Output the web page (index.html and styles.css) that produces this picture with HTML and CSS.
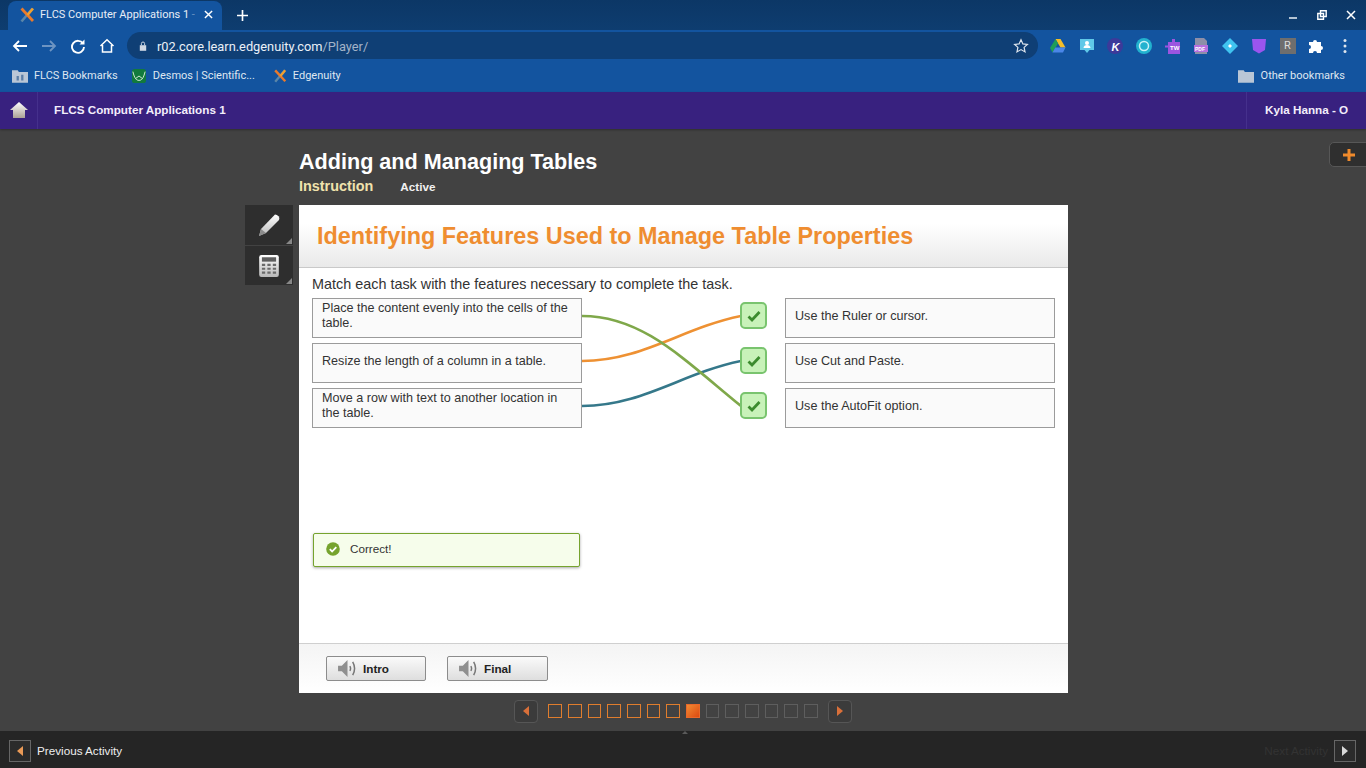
FILE: index.html
```html
<!DOCTYPE html>
<html lang="en">
<head>
<meta charset="utf-8">
<title>FLCS Computer Applications 1</title>
<link rel="stylesheet" href="styles.css">
</head>
<body>
<div class="browser">
  <div class="tabstrip">
    <div class="tab">
      <svg class="fav" viewBox="0 0 16 16"><path d="M13.500 1.500L2.500 14.500" stroke="#5b86a8" stroke-width="2.600"/><path d="M2.500 1.500L14 14" stroke="#ea7a2a" stroke-width="2.800"/><path d="M14 1.500L8.500 8" stroke="#f0a030" stroke-width="2.600"/></svg>
      <span class="tabtitle">FLCS Computer Applications 1 <span class="tabfade">-</span></span>
      <svg class="tabx" viewBox="0 0 10 10"><path d="M1 1l8 8M9 1l-8 8" stroke="#fff" stroke-width="1.600"/></svg>
    </div>
    <svg class="newtab" viewBox="0 0 12 12"><path d="M6 0v12M0 6h12" stroke="#fff" stroke-width="1.800"/></svg>
    <div class="winbtns">
      <svg viewBox="0 0 10 10"><path d="M1 8h8" stroke="#dfe6ee" stroke-width="1.600"/></svg>
      <svg viewBox="0 0 10 10"><path d="M3.500 .8h5.700v5.700h-5.700zM.8 3.500h5.700v5.700h-5.700z" fill="#123f70" stroke="#fff" stroke-width="1.400"/></svg>
      <svg viewBox="0 0 10 10"><path d="M1 1l8 8M9 1l-8 8" stroke="#fff" stroke-width="1.500"/></svg>
    </div>
  </div>
  <div class="toolbar">
    <svg class="tool" viewBox="0 0 16 16"><path d="M15 8H2M7 3L2 8l5 5" fill="none" stroke="#fff" stroke-width="1.800"/></svg>
    <svg class="tool" viewBox="0 0 16 16"><path d="M1 8h13M9 3l5 5-5 5" fill="none" stroke="#6d94c2" stroke-width="1.800"/></svg>
    <svg class="tool" viewBox="0 0 16 16"><path d="M13 5.500A6 6 0 1 0 14 9" fill="none" stroke="#fff" stroke-width="1.900"/><path d="M14.500 1.500v5h-5z" fill="#fff"/></svg>
    <svg class="tool" viewBox="0 0 16 16"><path d="M1.500 8L8 1.800 14.500 8M3.500 7v7h9V7" fill="none" stroke="#fff" stroke-width="1.500"/></svg>
    <div class="omnibox">
      <svg class="lock" viewBox="0 0 10 12"><path d="M1 5h8v7H1z" fill="#cfd8e4"/><path d="M3 5V3a2 2 0 0 1 4 0v2" fill="none" stroke="#cfd8e4" stroke-width="1.200"/></svg>
      <span class="url">r02.core.learn.edgenuity.com<span class="urlpath">/Player/</span></span>
      <svg class="star" viewBox="0 0 16 16"><path d="M8 1.800l1.900 4.100 4.500.5-3.300 3 .9 4.500L8 11.600l-4 2.300.9-4.500-3.300-3 4.500-.5z" fill="none" stroke="#dfe6ee" stroke-width="1.200"/></svg>
    </div>
    <div class="exts">
      <svg viewBox="0 0 16 16"><path d="M5.500 1h5l5 8.500h-5z" fill="#f4bd2a"/><path d="M5.500 1L0 10l2.500 4.500L8 5.500z" fill="#1f9d57"/><path d="M2.500 14.500h10.500l2.500-5H5.300z" fill="#4a86e8"/></svg>
      <svg viewBox="0 0 16 16"><path d="M1 1h14v11h-4.500L8 15l-2.500-3H1z" fill="#5fc8e8"/><circle cx="8" cy="5" r="2" fill="#fff"/><path d="M4.500 10c0-4 7-4 7 0z" fill="#fff"/></svg>
      <svg viewBox="0 0 16 16"><circle cx="8" cy="8" r="8" fill="#3c3a9a"/><text class="kglyph" x="4.500" y="12.500">K</text></svg>
      <svg viewBox="0 0 16 16"><circle cx="8" cy="8" r="8" fill="#22b2cf"/><circle cx="8" cy="8" r="4.500" fill="none" stroke="#c9f2f8" stroke-width="1.500"/></svg>
      <svg viewBox="0 0 16 16"><path d="M3 4h4V1h3v3h5v12H3V9.500H0v-2h3z" fill="#9b55e0"/><text class="twglyph" x="5" y="12">TW</text></svg>
      <svg viewBox="0 0 16 16"><path d="M2 0h9l3 3v13H2z" fill="#8d8fa8"/><path d="M1 7h14v7H1z" fill="#b66fe0"/><text class="pdfglyph" x="2" y="12.500">PDF</text></svg>
      <svg viewBox="0 0 16 16"><path d="M8 0l8 8-8 8-8-8z" fill="#40c4f0"/><path d="M8 6l2 2-2 2-2-2z" fill="#fff"/></svg>
      <svg viewBox="0 0 16 16"><path d="M1 1h14l-1 11-6 3.500L2 12z" fill="#9a55ee"/></svg>
      <div class="rbadge">R</div>
      <svg viewBox="0 0 16 16"><path d="M1 4h4a2 2 0 1 1 4 0h4v4a2 2 0 1 1 0 4v3H9a2 2 0 1 0-4 0H1v-4a2 2 0 1 0 0-4z" fill="#fff"/></svg>
      <svg viewBox="0 0 16 16"><circle cx="8" cy="2.500" r="1.500" fill="#dfe6ee"/><circle cx="8" cy="8" r="1.500" fill="#dfe6ee"/><circle cx="8" cy="13.500" r="1.500" fill="#dfe6ee"/></svg>
    </div>
  </div>
  <div class="bookmarks">
    <div class="bm bm-first"><svg class="bmicon" viewBox="0 0 14 12"><path d="M0 1h5l1 1.500h8V12H0z" fill="#b9c6d6"/><path d="M4 6h2v4H4zM8 5h2v5H8z" fill="#5b7ea6"/></svg>FLCS Bookmarks</div>
    <div class="bm bm-desmos"><svg class="bmicon" viewBox="0 0 16 16"><rect width="16" height="16" rx="3" fill="#127a3c"/><path d="M1 3c2 8 4 10 7 10s5-2 7-10M4 11l4-3 4 3" fill="none" stroke="#d7ecd9" stroke-width="1.100"/></svg>Desmos | Scientific...</div>
    <div class="bm"><svg class="bmicon" viewBox="0 0 16 16"><path d="M13.500 1.500L2.500 14.500" stroke="#5b86a8" stroke-width="2.600"/><path d="M2.500 1.500L14 14" stroke="#ea7a2a" stroke-width="2.800"/><path d="M14 1.500L8.500 8" stroke="#f0a030" stroke-width="2.600"/></svg>Edgenuity</div>
    <div class="bm bm-other"><svg class="bmicon" viewBox="0 0 14 12"><path d="M0 1h5l1 1.500h8V12H0z" fill="#b9c6d6"/></svg>Other bookmarks</div>
  </div>
</div>

<header class="navbar">
  <div class="navhome"><svg viewBox="0 0 18 17"><path d="M9 0l9 8H15v8H3V8H0z" fill="url(#homegrad)"/><defs><linearGradient id="homegrad" x1="0" y1="0" x2="0" y2="1"><stop offset="0" stop-color="#fff"/><stop offset="1" stop-color="#aaa296"/></linearGradient></defs></svg></div>
  <div class="navtitle">FLCS Computer Applications 1</div>
  <div class="navuser">Kyla Hanna - O</div>
</header>

<main class="stage">
  <button class="plus" aria-label="Expand"><svg viewBox="0 0 12 12"><path d="M4.500 0h3v4.500H12v3H7.500V12h-3V7.500H0v-3h4.500z" fill="#ef8a2c"/></svg></button>
  <div class="activity">
    <h1 class="lesson">Adding and Managing Tables</h1>
    <div class="sub"><span class="instr">Instruction</span><span class="active">Active</span></div>
    <div class="work">
      <aside class="tools">
        <div class="toolbtn"><svg viewBox="0 0 24 24"><path d="M18 1.500q2 0 3.500 1.800t.5 3.700L9 20l-7 3 2-7z" fill="url(#toolgrad)"/><path d="M4 16l5 4-7 3z" fill="#8b8b8b"/><defs><linearGradient id="toolgrad" x1="0" y1="0" x2="0" y2="1"><stop offset="0" stop-color="#fff"/><stop offset="1" stop-color="#b9b9b9"/></linearGradient></defs></svg></div>
        <div class="toolbtn"><svg viewBox="0 0 20 22"><rect x="1" y="1" width="18" height="20" rx="2" fill="url(#toolgrad)"/><rect x="3.500" y="3" width="13" height="4" fill="#5e5e5e"/><path d="M3.500 9h3v2h-3zM8.500 9h3v2h-3zM13.500 9h3v2h-3zM3.500 12.500h3v2h-3zM8.500 12.500h3v2h-3zM13.500 12.500h3v2h-3zM3.500 16h3v2h-3zM8.500 16h3v2h-3zM13.500 16h3v2h-3z" fill="#6a6a6a"/></svg></div>
      </aside>
      <section class="card">
        <div class="cardhead"><h2 class="cardtitle">Identifying Features Used to Manage Table Properties</h2></div>
        <div class="cardbody">
          <p class="prompt">Match each task with the features necessary to complete the task.</p>
          <div class="match">
            <div class="col">
              <div class="opt">Place the content evenly into the cells of the table.</div>
              <div class="opt opt-single">Resize the length of a column in a table.</div>
              <div class="opt">Move a row with text to another location in the table.</div>
            </div>
            <svg class="wires" viewBox="0 0 159 130">
              <path d="M0 63C60 63 100 30 159 18" stroke="#ee9133"/>
              <path d="M0 108C60 108 100 75 159 63" stroke="#35788a"/>
              <path d="M0 18C60 18 100 60 159 108" stroke="#7fa84a"/>
            </svg>
            <div class="checks">
              <div class="check"><svg viewBox="0 0 14 12"><path d="M1.500 6.500l3.500 3.500L12.500 2" fill="none" stroke="#3c8c2e" stroke-width="2.800"/></svg></div>
              <div class="check"><svg viewBox="0 0 14 12"><path d="M1.500 6.500l3.500 3.500L12.500 2" fill="none" stroke="#3c8c2e" stroke-width="2.800"/></svg></div>
              <div class="check"><svg viewBox="0 0 14 12"><path d="M1.500 6.500l3.500 3.500L12.500 2" fill="none" stroke="#3c8c2e" stroke-width="2.800"/></svg></div>
            </div>
            <div class="col">
              <div class="opt opt-single">Use the Ruler or cursor.</div>
              <div class="opt opt-single">Use Cut and Paste.</div>
              <div class="opt opt-single">Use the AutoFit option.</div>
            </div>
          </div>
          <div class="feedback"><svg viewBox="0 0 14 14"><circle cx="7" cy="7" r="6.800" fill="#76a32e"/><path d="M3.800 7.200l2.300 2.300 4.200-4.400" fill="none" stroke="#fff" stroke-width="1.800"/></svg>Correct!</div>
        </div>
        <div class="cardfoot">
          <button class="audio"><svg viewBox="0 0 20 18"><path d="M0 6h4l6-6v18l-6-6H0z" fill="#8f8f8f"/><path d="M12.500 6.500q1.500 2.500 0 5M15.500 2q4 7 0 14" fill="none" stroke="#777" stroke-width="1.600"/></svg>Intro</button>
          <button class="audio audio-final"><svg viewBox="0 0 20 18"><path d="M0 6h4l6-6v18l-6-6H0z" fill="#8f8f8f"/><path d="M12.500 6.500q1.500 2.500 0 5M15.500 2q4 7 0 14" fill="none" stroke="#777" stroke-width="1.600"/></svg>Final</button>
        </div>
      </section>
    </div>
    <nav class="pager">
      <button class="pgarrow"><svg viewBox="0 0 6 10"><path d="M6 0v10L0 5z" fill="#d9703a"/></svg></button>
      <div class="pgsquares">
        <i class="sq done"></i><i class="sq done"></i><i class="sq done"></i><i class="sq done"></i><i class="sq done"></i><i class="sq done"></i><i class="sq done"></i><i class="sq cur"></i><i class="sq"></i><i class="sq"></i><i class="sq"></i><i class="sq"></i><i class="sq"></i><i class="sq"></i>
      </div>
      <button class="pgarrow"><svg viewBox="0 0 6 10"><path d="M0 0v10l6-5z" fill="#d9703a"/></svg></button>
    </nav>
  </div>
</main>

<footer class="footbar">
  <div class="fnav"><button class="farrow"><svg viewBox="0 0 6 10"><path d="M6 0v10L0 5z" fill="#ea9a57"/></svg></button><span class="flabel">Previous Activity</span></div>
  <div class="fnav"><span class="flabel flabel-off">Next Activity</span><button class="farrow"><svg viewBox="0 0 6 10"><path d="M0 0v10l6-5z" fill="#d8d8d8"/></svg></button></div>
</footer>
</body>
</html>
```

FILE: styles.css
```css
* { box-sizing: border-box; }
html, body { margin: 0; height: 100%; }
body {
  width: 1366px; height: 768px; overflow: hidden; display: flex; flex-direction: column;
  background: #424242; font-family: "Liberation Sans", Arial, sans-serif; color: #222;
}
h1, h2, p { margin: 0; }
button { font-family: inherit; padding: 0; cursor: pointer; }

/* browser chrome */
.browser { flex: none; height: 92px; font-family: Roboto, "Liberation Sans", sans-serif; background: #13549f; }
.tabstrip { height: 30px; display: flex; align-items: flex-end; padding-left: 8px; background: linear-gradient(#0c3766, #0e3d70); }
.tab { width: 214px; height: 29px; display: flex; align-items: center; padding: 0 9px 2px 11px; background: #13549f; border-radius: 8px 8px 0 0; color: #e8eef6; font-size: 11px; }
.fav { width: 16px; height: 16px; flex: none; }
.tabtitle { margin-left: 5px; flex: 1; white-space: nowrap; }
.tabfade { opacity: .4; }
.tabx { width: 9px; height: 9px; flex: none; }
.newtab { width: 11px; height: 11px; margin: 0 0 9px 15px; flex: none; }
.winbtns { margin-left: auto; display: flex; gap: 19px; padding: 0 10px 10px 0; align-self: flex-end; }
.winbtns svg { width: 10px; height: 10px; }
.toolbar { height: 31px; display: flex; align-items: center; padding-left: 12px; }
.tool { width: 16px; height: 16px; flex: none; margin-right: 13px; }
.omnibox { width: 911px; height: 27px; margin-left: -1px; border-radius: 14px; background: #0f3f75; display: flex; align-items: center; padding: 0 9px 0 12px; font-size: 12.800px; }
.lock { width: 8px; height: 10px; flex: none; }
.url { margin-left: 10px; padding-top: 1px; color: #eaf0f7; }
.urlpath { color: #a3b4c9; }
.star { width: 16px; height: 16px; margin-left: auto; }
.exts { display: flex; align-items: center; gap: 12.700px; margin-left: 12px; }
.exts svg, .rbadge { width: 16px; height: 16px; flex: none; }
.rbadge { background: #6e6e6e; color: #ddd; font-size: 11px; line-height: 16px; text-align: center; }
.kglyph { font: italic bold 11px "Liberation Sans", sans-serif; fill: #fff; }
.twglyph { font: bold 6px "Liberation Sans", sans-serif; fill: #fff; }
.pdfglyph { font: bold 5px "Liberation Sans", sans-serif; fill: #fff; }
.bookmarks { height: 31px; display: flex; align-items: center; padding: 0 21px 2px 12px; color: #dfe7f1; font-size: 11px; }
.bm { display: flex; align-items: center; gap: 5px; margin-right: 17px; }
.bm-first { gap: 6px; margin-right: 13px; }
.bm-desmos { gap: 6px; }
.bmicon { width: 16px; height: 14px; flex: none; }
.bm-other { margin: 0 0 0 auto; gap: 7px; }

/* app navbar */
.navbar { flex: none; height: 37px; display: flex; align-items: center; background: #38217f; color: #f3eefb; font-size: 11.700px; font-weight: bold; box-shadow: 0 1px 2px rgba(0,0,0,.3); }
.navhome { width: 38px; height: 100%; display: flex; align-items: center; justify-content: center; border-right: 1px solid #45308c; }
.navhome svg { width: 18px; height: 17px; }
.navtitle { margin: 0 0 2px 16px; }
.navuser { margin-left: auto; height: 100%; width: 120px; padding-left: 18px; line-height: 36px; border-left: 1px solid #45308c; }

/* stage */
.stage { flex: 1; position: relative; display: flex; padding-left: 299px; }
.plus { position: absolute; right: -5px; top: 13px; width: 42px; height: 25px; background: #2f2f2f; border: 1px solid #575757; border-radius: 5px; display: flex; align-items: center; padding-left: 13px; }
.plus svg { width: 12px; height: 12px; }
.activity { width: 769px; }
.lesson { margin-top: 20px; font-size: 21.600px; line-height: 25px; color: #fff; }
.sub { margin-top: 2px; height: 20px; display: flex; align-items: center; color: #fff; font-weight: bold; }
.instr { font-size: 14.400px; color: #f0e2ad; }
.active { margin-left: 27px; font-size: 11.700px; color: #f1f1f1; }
.work { display: flex; margin: 9px 0 0 -54px; }
.tools { width: 48px; margin-right: 6px; flex: none; }
.toolbtn { position: relative; height: 40px; margin-bottom: 1px; background: #2e2e2e; display: flex; align-items: center; justify-content: center; }
.toolbtn + .toolbtn { height: 39px; }
.toolbtn::after { content: ""; position: absolute; right: 1px; bottom: 1px; border: 3px solid; border-color: transparent #888 #888 transparent; }
.toolbtn svg { width: 24px; height: 24px; }
.card { width: 769px; height: 488px; flex: none; background: #fff; display: flex; flex-direction: column; }
.cardhead { height: 63px; padding: 17px 0 0 18px; border-bottom: 1px solid #c9c9c9; background: linear-gradient(#fff 30%, #e9e9e9); }
.cardtitle { font-size: 23.400px; line-height: 28px; color: #ef8d30; }
.cardbody { flex: 1; padding: 8px 13px 0; }
.prompt { font-size: 14.400px; line-height: 17px; color: #333; }
.match { display: flex; margin-top: 5px; height: 130px; }
.col { width: 270px; flex: none; display: flex; flex-direction: column; gap: 5px; }
.opt { height: 40px; padding: 2px 9px 0; border: 1px solid #9b9b9b; background: #fafafa; font-size: 12.600px; line-height: 15px; color: #333; }
.opt-single { padding-top: 10px; }
.wires { width: 159px; height: 130px; flex: none; }
.wires path { fill: none; stroke-width: 2.600; }
.checks { width: 27px; margin: 4px 18px 0 -1px; flex: none; display: flex; flex-direction: column; gap: 18px; }
.check { width: 27px; height: 27px; border: 2px solid #79c46e; border-radius: 5px; background: #c8f2b9; display: flex; align-items: center; justify-content: center; }
.check svg { width: 14px; height: 12px; }
.feedback { width: 267px; height: 34px; margin: 105px 0 0 1px; display: flex; align-items: center; gap: 10px; padding: 0 12px 3px; border: 1px solid #76a32e; border-radius: 2px; background: #f6fdeb; box-shadow: 0 1px 3px rgba(0,0,0,.35); font-size: 11.700px; color: #333; }
.feedback svg { width: 14px; height: 14px; flex: none; }
.cardfoot { height: 50px; padding-top: 12px; display: flex; gap: 21px; padding-left: 27px; border-top: 1px solid #cfcfcf; background: linear-gradient(#f4f4f4, #fff); }
.audio { width: 100px; height: 25px; display: flex; align-items: center; gap: 6px; padding-left: 11px; border: 1px solid #8c8c8c; border-radius: 2px; background: linear-gradient(#fafafa, #dedede); font-size: 11.700px; font-weight: bold; color: #222; }
.audio-final { width: 101px; }
.audio svg { width: 19px; height: 17px; flex: none; }
.pager { display: flex; align-items: center; justify-content: center; height: 24px; margin-top: 6px; padding-right: 1px; }
.pgarrow { width: 24px; height: 23px; background: #3b3b3b; border: 1px solid #565656; border-radius: 4px; display: flex; align-items: center; justify-content: center; }
.pgarrow svg { width: 6px; height: 10px; }
.pgsquares { display: flex; gap: 5.900px; margin: 0 10px; }
.sq { display: block; width: 13.800px; height: 14px; border: 1px solid #5e5e5e; }
.sq.done { border-color: #e07d2d; }
.sq.cur { border-color: #e9682a; background: linear-gradient(135deg, #f08a33, #dc4a10); }

/* footer */
.footbar { flex: none; height: 37px; position: relative; display: flex; align-items: center; justify-content: space-between; padding: 3px 10px 0 9px; background: #252525; font-size: 11.700px; }
.footbar::before { content: ""; position: absolute; left: 682px; top: -3px; border: 3px solid transparent; border-bottom-color: #5a5a5a; }
.fnav { display: flex; align-items: center; gap: 6px; }
.farrow { width: 22px; height: 22px; background: #2b2b2b; border: 1px solid #666; display: flex; align-items: center; justify-content: center; }
.farrow svg { width: 6px; height: 10px; }
.flabel { color: #eee; margin-bottom: 2px; }
.flabel-off { color: #333; }
```
